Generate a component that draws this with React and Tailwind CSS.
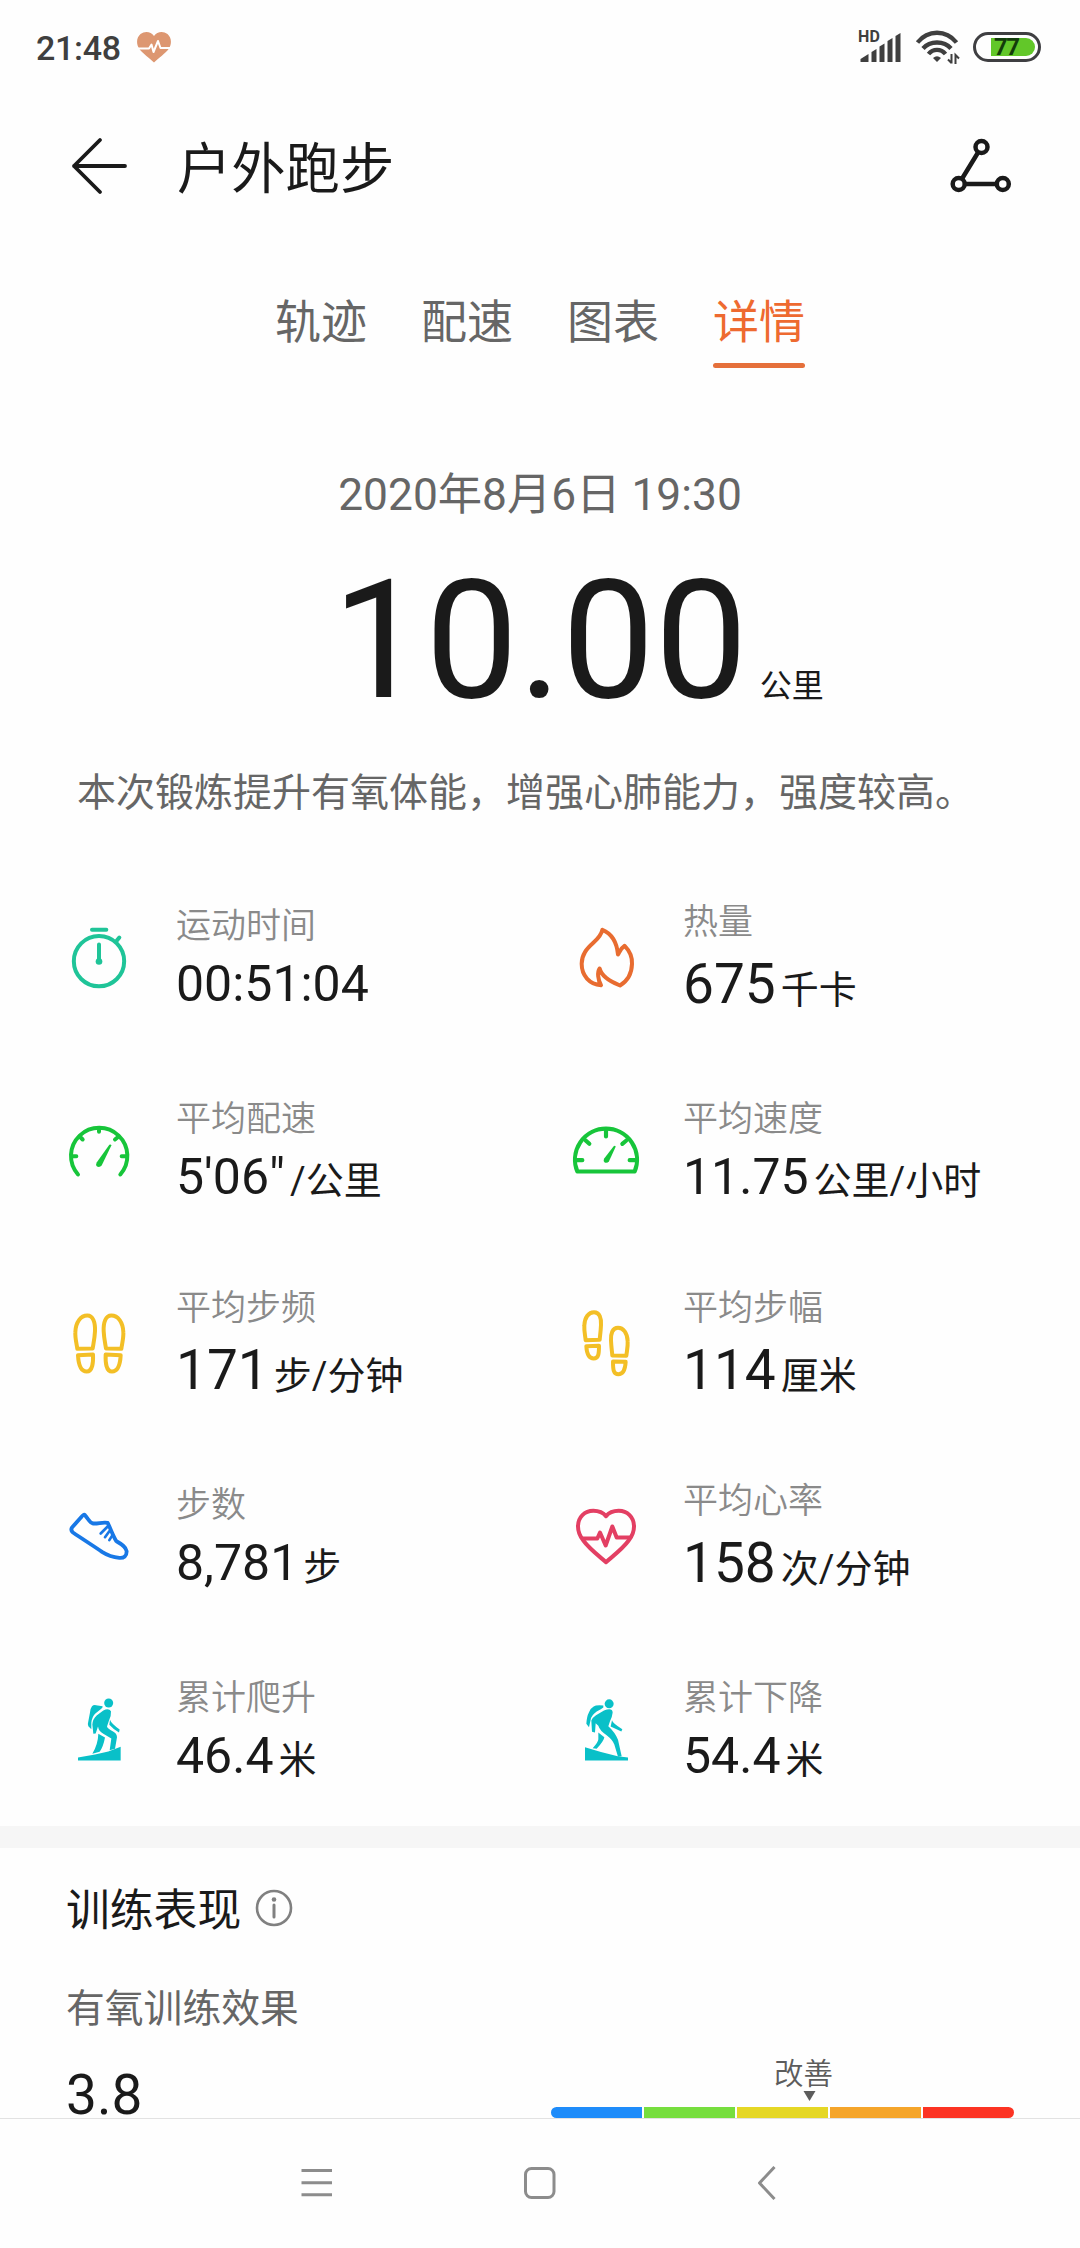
import React from "react";

function StatusBar() {
  return (
    <div className="flex h-[94px] items-center pl-[36px] pr-[39px] text-[#3f3f3f]">
      <span className="text-[34px] leading-[40px] font-medium tracking-[-0.3px] pt-[2px]">21:48</span>
      <svg className="ml-[15px] h-[32px] w-[36px]" viewBox="0 0 36 32">
        <path d="M18 31.5C14 27.5 6 22 3 17.500C0 12.500 0.500 6.500 4.500 3C9-0.500 15 0.500 18 5C21 0.500 27-0.500 31.500 3C35.500 6.500 36 12.500 33 17.500C30 22 22 27.500 18 31.500Z" fill="#dd9771" />
        <path d="M2 17.500H13L15.500 13.500L17.500 21L22 10L24.500 17H34" fill="none" stroke="#fff" strokeWidth="2" strokeLinejoin="round" />
      </svg>
      <div className="ml-auto flex items-center">
        <div className="relative h-[34px] w-[44px]">
          <span className="absolute -left-[1px] -top-[1px] text-[16px] leading-[16px] font-bold tracking-[0.3px]">HD</span>
          <svg className="h-full w-full" viewBox="0 0 44 34" fill="#3f3f3f">
            <path d="M1.500 31.500V29L9.500 24V31.500Q9.500 32 9 32H2Q1.500 32 1.500 31.500Z" />
            <path d="M12.500 32V22L17.500 19V32Z" />
            <path d="M20.500 32V16.500L25.500 13.500V32Z" />
            <path d="M28.500 32V11L33.500 8V32Z" />
            <path d="M36.500 32V6L41.500 3V32Z" />
          </svg>
        </div>
        <svg className="ml-[12px] h-[34px] w-[46px]" viewBox="0 0 46 34" fill="none" stroke="#3f3f3f" strokeWidth="4.300">
          <path d="M2.500 12.500C13-0.500 31-0.500 41.500 12.500" />
          <path d="M8 18.500C15 10.500 29 10.500 36 18.500" />
          <path d="M13.500 24C18 18.500 26 18.500 30.500 24" />
          <path d="M18 28Q22 24.500 26 28L22 32Z" fill="#3f3f3f" stroke="none" />
          <path d="M36.500 24V33.500M36.500 33L33 29.500M40.500 34V25L44 28.500" strokeWidth="2" />
        </svg>
        <div className="ml-[12px] mr-0 flex h-[30px] w-[68px] items-center justify-end rounded-full border-[3px] border-[#3f3f42] pr-[3px]">
          <div className="flex h-[18px] w-[44px] items-center rounded-l-[2px] rounded-r-full bg-[#62c729] pl-[3px] text-[24px] leading-[18px] font-bold tracking-[-1.500px] text-[#123c0b]">
            77
          </div>
        </div>
      </div>
    </div>
  );
}

function Header() {
  return (
    <div className="flex h-[144px] items-center pl-[70px] pr-[66px]">
      <svg className="h-[58px] w-[58px]" viewBox="0 0 58 58" fill="none" stroke="#1a1a1a" strokeWidth="3.800" strokeLinecap="round" strokeLinejoin="round">
        <path d="M55 29H4M30 3L4 29L30 55" />
      </svg>
      <h1 className="ml-[49px] pt-[8px] text-[54.300px] leading-[66px] font-normal text-[#1a1a1a]">户外跑步</h1>
      <svg className="ml-auto h-[60px] w-[64px]" viewBox="0 0 64 60" fill="none" stroke="#1a1a1a" strokeWidth="4.500">
        <circle cx="31.500" cy="11" r="6" />
        <circle cx="8.700" cy="48" r="6" />
        <circle cx="52.800" cy="48" r="6" />
        <path d="M28.200 16.300L12 42.700M15 48H46.500" />
      </svg>
    </div>
  );
}

const tabs = ["轨迹", "配速", "图表", "详情"];

function Tabs() {
  return (
    <div className="mt-[54px] flex justify-center gap-[54px]">
      {tabs.map((t, i) => (
        <div key={t} className={i === 3 ? "text-[#ee6a30]" : "text-[#666666]"}>
          <div className="text-[46px] leading-[60px]">{t}</div>
          <div className={i === 3 ? "mt-[11px] h-[5px] rounded-full bg-[#e5703b]" : "mt-[11px] h-[5px]"} />
        </div>
      ))}
    </div>
  );
}

const line = { fill: "none", strokeLinecap: "round", strokeLinejoin: "round" };

const icons = {
  timer: (
    <svg className="size-[72px]" viewBox="69 121.5 216 216" stroke="#1fc498" strokeWidth="12" {...line}>
      <circle cx="177" cy="242" r="75.500" />
      <path d="M156 147.500H199M230 181L238 171M177 192V242" />
      <circle cx="177" cy="243" r="10" fill="#1fc498" stroke="none" />
    </svg>
  ),
  fire: (
    <svg className="size-[72px]" viewBox="60 121.5 216 216" stroke="#e86c30" strokeWidth="12" {...line}>
      <path d="M157 148C182 158 200 180 204 222C210 212 214 202 224 196C238 210 247 228 246 250C245 285 228 304 210 315C185 305 155 290 149 264C141 275 144 298 153 314C118 312 95 285 95 250C95 222 110 205 130 187C146 172 155 160 157 148Z" />
    </svg>
  ),
  pace: (
    <svg className="size-[72px]" viewBox="69 700.5 216 216" stroke="#17c53a" strokeWidth="12" {...line}>
      <path d="M114 882A84.500 84.500 0 1 1 241 882" />
      <path d="M177 744V754M96 827H109M245 827H258M119 768L128 777M236 768L225 777" />
      <path d="M214 795L185 855Q179 862 171 858Q166 853 170 846L208 793Q213 790 214 795Z" fill="#17c53a" stroke="none" />
    </svg>
  ),
  speed: (
    <svg className="size-[72px]" viewBox="60 700.5 216 216" stroke="#17c53a" strokeWidth="12.500" {...line}>
      <path d="M82 873A93 93 0 1 1 254 873Z" />
      <path d="M168 750V768M82 839H97M239 839H254M107 780L118 790M229 780L217 790" />
      <path d="M197 799L177 842Q172 849 164 846Q159 842 162 835L191 797Q196 794 197 799Z" fill="#17c53a" stroke="none" />
    </svg>
  ),
  cadence: (
    <svg className="size-[72px]" viewBox="69 109.500 216 216" stroke="#f3bf26" strokeWidth="12" {...line}>
      {[undefined, "translate(356 0) scale(-1 1)"].map((t, i) => (
        <g key={i} transform={t}>
          <path d="M112 235C109 215 105 202 106 185C107 155 122 135 142 135C159 135 166 155 165 182C164 205 160 220 158 234Z" />
          <path d="M114 254L159 252C160 275 158 303 140 303C119 303 115 275 114 254Z" />
        </g>
      ))}
    </svg>
  ),
  stride: (
    <svg className="size-[72px]" viewBox="60 109.500 216 216" stroke="#f3bf26" strokeWidth="12" {...line}>
      {[undefined, "translate(336 47) scale(-1 1)"].map((t, i) => (
        <g key={i} transform={t}>
          <path d="M107 209C105 192 102 180 103 165C104 140 116 125 132 125C149 125 154 143 153 163C152 185 150 195 149 208Z" />
          <path d="M109 227L147 226C147 250 146 264 131 264C114 264 110 245 109 227Z" />
        </g>
      ))}
    </svg>
  ),
  shoe: (
    <svg className="size-[72px]" viewBox="69 688.500 216 216" stroke="#1878e6" strokeWidth="11.500" {...line}>
      <path d="M135 734C145 745 148 757 160 759C175 760 188 754 203 757C212 775 219 796 229 812C243 820 258 828 260 842C260 857 252 863 238 862C215 860 200 853 186 844C160 826 128 806 99 786C93 781 93 776 96 771L122 742C127 735 132 731 135 734Z" />
      <path d="M203 768L182 789M208 782L195 800M216 796L208 809" strokeWidth="8" />
    </svg>
  ),
  heart: (
    <svg className="size-[72px]" viewBox="60 688.500 216 216" stroke="#e33f63" strokeWidth="12" {...line}>
      <path d="M168 875C150 859 118 835 100 810C88 795 84 782 84 768C84 740 104 721 130 721C148 721 160 727 168 737C176 727 188 721 206 721C232 721 252 740 252 768C252 782 248 795 236 810C218 835 186 859 168 875Z" />
      <path d="M100 804H142L150 786L167 825L187 768L200 801H238" strokeWidth="12" />
    </svg>
  ),
  climb: (
    <svg className="size-[72px]" viewBox="69 97.500 216 216" fill="#09c0c8">
      <circle cx="206" cy="127.500" r="13.500" />
      <path d="M156 137Q160 133 168 134L188 137Q189 142 182 146L167 158Q156 168 154 186L154 206L145 197Q142 191 145 182L150 156Q151 143 156 137Z" />
      <path d="M160 220L157 192Q158 176 170 165L190 150Q206 142 213 152Q214 166 207 180L201 198Q203 205 218 212Q231 218 231 230L225 265L209 269L214 234L190 220Q176 212 174 198L167 219Z" />
      <path d="M210 178Q214 190 239 207L237 216Q219 206 208 193Z" />
      <path d="M175 220L195 231Q190 258 179 274L157 280Q174 252 175 220Z" />
      <path d="M114 291L165 282L205 273L242 259V300H114Z" />
    </svg>
  ),
  descend: (
    <svg className="size-[72px]" viewBox="60 97.500 216 216" fill="#09c0c8">
      <circle cx="177.500" cy="130" r="13.500" />
      <path d="M131 138Q138 133 160 135L160 141Q155 146 140 153Q124 164 122 178L117 200L109 190Q110 168 117 155Q123 142 131 138Z" />
      <path d="M126 214L124 180Q126 172 138 164L162 150Q187 140 188 156Q187 168 180 182L175 197Q196 216 204 238L215 287L204 289L193 252Q188 238 170 224Q150 212 145 196L137 188L135 216Z" />
      <path d="M186 179Q188 188 217 206L214 213L182 198Z" />
      <path d="M145 216L163 230Q162 240 140 265L128 263Q145 244 145 236Z" />
      <path d="M105 260Q155 276 203 287L234 291V300H105Z" />
    </svg>
  ),
};

const metrics = [
  { icon: "timer", label: "运动时间", value: "00:51:04", unit: "" },
  { icon: "fire", label: "热量", value: "675", unit: "千卡", big: true },
  { icon: "pace", label: "平均配速", value: "5'06\"", unit: "/公里" },
  { icon: "speed", label: "平均速度", value: "11.75", unit: "公里/小时" },
  { icon: "cadence", label: "平均步频", value: "171", unit: "步/分钟", big: true },
  { icon: "stride", label: "平均步幅", value: "114", unit: "厘米", big: true },
  { icon: "shoe", label: "步数", value: "8,781", unit: "步" },
  { icon: "heart", label: "平均心率", value: "158", unit: "次/分钟", big: true },
  { icon: "climb", label: "累计爬升", value: "46.4", unit: "米" },
  { icon: "descend", label: "累计下降", value: "54.4", unit: "米" },
];

function Metric({ icon, label, value, unit, big }) {
  return (
    <div className="flex h-[193px] items-center">
      {icons[icon]}
      <div className="ml-[41px] whitespace-nowrap pt-[3px]">
        <div className="text-[35px] leading-[52px] font-[350] text-[#8a8a8a]">{label}</div>
        <div className={big ? "text-[55px] leading-[71px] text-[#1a1a1a]" : "text-[50px] leading-[63px] text-[#1a1a1a]"}>
          {value}
          {unit && <span className="ml-[5px] text-[38px] leading-none">{unit}</span>}
        </div>
      </div>
    </div>
  );
}

const zones = ["bg-[#1e8cfa]", "bg-[#76de3e]", "bg-[#e5d725]", "bg-[#f5a52a]", "bg-[#fc3323]"];

function Training() {
  return (
    <div className="pl-[66px] pr-[66px] pt-[33px]">
      <div className="flex h-[60px] items-center text-[#1a1a1a]">
        <h2 className="text-[43.800px] leading-[60px] font-normal">训练表现</h2>
        <svg className="-mt-[6px] ml-[14px] size-[38px]" viewBox="0 0 38 38" fill="none" stroke="#808080" strokeWidth="2.600">
          <circle cx="19" cy="19" r="17" />
          <circle cx="19" cy="10.500" r="2.300" fill="#808080" stroke="none" />
          <path d="M19 16V28" strokeWidth="3" strokeLinecap="round" />
        </svg>
      </div>
      <div className="mt-[40px] text-[38.800px] leading-[56px] text-[#666666]">有氧训练效果</div>
      <div className="flex justify-between">
        <div className="pt-[36px] text-[55px] leading-[45px] text-[#1a1a1a]">3.8</div>
        <div className="w-[463px] pt-[17px]">
          <div className="pl-[223px] text-[29.500px] leading-[40px] font-[350] text-[#5c5c5c]">改善</div>
          <svg className="-mt-[3px] ml-[252px] h-[10px] w-[13px]" viewBox="0 0 13 10">
            <path d="M0.500 0H12.500L6.500 10Z" fill="#5c5c5c" />
          </svg>
          <div className="mt-[6px] flex h-[11px] gap-[2px] overflow-hidden rounded-full">
            {zones.map((z) => (
              <div key={z} className={"flex-1 " + z} />
            ))}
          </div>
        </div>
      </div>
    </div>
  );
}

function NavBar() {
  return (
    <div className="flex h-[130px] border-t border-[#e2e2e2]">
      <svg className="ml-[301px] mt-[48px] h-[32px] w-[32px]" viewBox="0 0 32 32" stroke="#8c8c8c" strokeWidth="3">
        <path d="M0.500 3.500H31M0.500 15.700H31M0.500 27.800H31" />
      </svg>
      <svg className="ml-[190px] mt-[47px] h-[34px] w-[34px]" viewBox="0 0 34 34" fill="none" stroke="#8c8c8c" strokeWidth="3">
        <rect x="2.500" y="2.500" width="28.500" height="29" rx="6" />
      </svg>
      <svg className="ml-[199px] mt-[47px] h-[34px] w-[22px]" viewBox="0 0 22 34" fill="none" stroke="#8c8c8c" strokeWidth="3" strokeLinejoin="round">
        <path d="M18.500 1L3.500 17L18.500 33" />
      </svg>
    </div>
  );
}

export default function App() {
  return (
    <div lang="zh-CN" className="flex h-[2248px] w-[1080px] flex-col overflow-hidden bg-[#fefefe] font-['Roboto','Noto_Sans_CJK_SC',sans-serif]">
      <div className="h-[2118px] shrink-0">
        <StatusBar />
        <Header />
        <Tabs />
        <div className="mt-[97px] text-center text-[44.300px] leading-[60px] text-[#666666]">2020年8月6日 19:30</div>
        <div className="mt-[26px] grid grid-cols-[1fr_auto_1fr] items-baseline text-[#1a1a1a]">
          <div />
          <div className="text-[165.400px] leading-[180px]">10.00</div>
          <div className="pl-[12px] text-[32px] leading-[40px]">公里</div>
        </div>
        <p className="mt-[34px] whitespace-nowrap pl-[77px] text-[39px] leading-[56px] text-[#666666]">
          本次锻炼提升有氧体能，增强心肺能力，强度较高。
        </p>
        <div className="mt-[39px] grid grid-cols-[507px_1fr] pl-[63px]">
          {metrics.map((m) => (
            <Metric key={m.icon} {...m} />
          ))}
        </div>
        <div className="mt-[1px] h-[22px] bg-[#f6f6f6]" />
        <Training />
      </div>
      <NavBar />
    </div>
  );
}
